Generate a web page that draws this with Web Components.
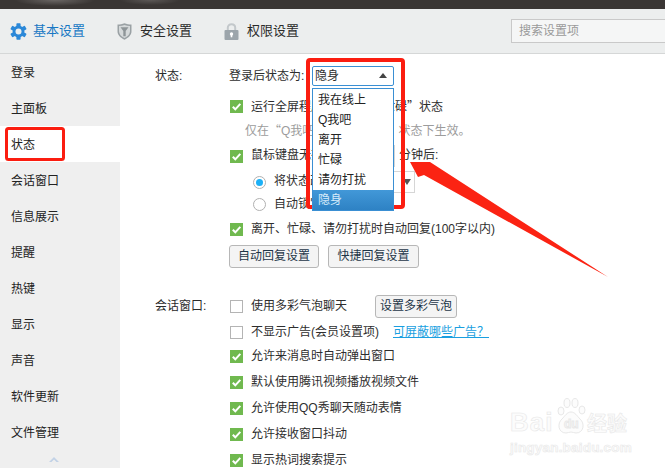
<!DOCTYPE html>
<html lang="zh-CN">
<head>
<meta charset="utf-8">
<title>系统设置</title>
<style>
    html, body { margin: 0; padding: 0; background: #fff; }
    body {
        width: 665px;
        height: 468px;
        overflow: hidden;
        font: 12px/16px "Liberation Sans", "Noto Sans CJK SC", sans-serif;
        color: #2e2e2e;
    }
</style>
</head>
<body>
<qq-settings>
    <qq-tabbar slot="top">
        <qq-tab active icon="gear">基本设置</qq-tab>
        <qq-tab icon="shield">安全设置</qq-tab>
        <qq-tab icon="lock">权限设置</qq-tab>
    </qq-tabbar>
    <qq-sidebar slot="side">
        <qq-nav>登录</qq-nav>
        <qq-nav>主面板</qq-nav>
        <qq-nav active>状态</qq-nav>
        <qq-nav>会话窗口</qq-nav>
        <qq-nav>信息展示</qq-nav>
        <qq-nav>提醒</qq-nav>
        <qq-nav>热键</qq-nav>
        <qq-nav>显示</qq-nav>
        <qq-nav>声音</qq-nav>
        <qq-nav>软件更新</qq-nav>
        <qq-nav>文件管理</qq-nav>
    </qq-sidebar>

    <qq-section label="状态:" style="margin-top:11px">
        <qq-row>登录后状态为:<qq-select value="隐身"></qq-select></qq-row>
        <qq-row gap="8"><qq-check checked>运行全屏程序时切换为<q-q>“</q-q>忙碌<q-q>”</q-q>状态</qq-check></qq-row>
        <qq-row gap="2" indent="16"><qq-hint>仅在<q-q>“</q-q>Q我吧<q-q>”、“</q-q>我在线上<q-q>”</q-q>状态下生效。</qq-hint></qq-row>
        <qq-row gap="4"><qq-check checked>鼠标键盘无操作超过<qq-field></qq-field>分钟后:</qq-check></qq-row>
        <qq-row gap="4" indent="24"><qq-radio checked>将状态改为<qq-field menu></qq-field></qq-radio></qq-row>
        <qq-row gap="0" indent="24"><qq-radio>自动锁定QQ</qq-radio></qq-row>
        <qq-row gap="3"><qq-check checked>离开、忙碌、请勿打扰时自动回复(100字以内)</qq-check></qq-row>
        <qq-row gap="5"><qq-button>自动回复设置</qq-button><qq-button style="margin-left:9px;padding:0 8.5px">快捷回复设置</qq-button></qq-row>
    </qq-section>

    <qq-section label="会话窗口:" style="margin-top:28px">
        <qq-row><qq-check>使用多彩气泡聊天</qq-check><qq-button style="margin-left:28px;padding:0 4px">设置多彩气泡</qq-button></qq-row>
        <qq-row gap="4"><qq-check>不显示广告(会员设置项)</qq-check><qq-link>可屏蔽哪些广告？</qq-link></qq-row>
        <qq-row gap="2"><qq-check checked>允许来消息时自动弹出窗口</qq-check></qq-row>
        <qq-row gap="4"><qq-check checked>默认使用腾讯视频播放视频文件</qq-check></qq-row>
        <qq-row gap="4"><qq-check checked>允许使用QQ秀聊天随动表情</qq-check></qq-row>
        <qq-row gap="4"><qq-check checked>允许接收窗口抖动</qq-check></qq-row>
        <qq-row gap="4"><qq-check checked>显示热词搜索提示</qq-check></qq-row>
    </qq-section>
</qq-settings>
<qq-watermark></qq-watermark>
<qq-marks></qq-marks>

<script>
const ICONS = {
    gear: `<svg width="17" height="17" viewBox="0 0 17 17"><g fill="#2b88d8"><circle cx="8.5" cy="8.5" r="5.9"/><rect x="6.4" y="0.2" width="4.2" height="16.6" rx=".8"/><rect x="6.4" y="0.2" width="4.2" height="16.6" rx=".8" transform="rotate(60 8.5 8.5)"/><rect x="6.4" y="0.2" width="4.2" height="16.6" rx=".8" transform="rotate(120 8.5 8.5)"/></g><circle cx="8.5" cy="8.5" r="3" fill="#eceeee"/></svg>`,
    shield: `<svg width="15" height="17" viewBox="0 0 15 17"><path d="M.5 1.6C3 1.6 5.4 1.1 7.5.3c2.100.8 4.500 1.300 7 1.300v6.700c0 3.800-3 6.600-7 8.400-4-1.800-7-4.600-7-8.400z" fill="#9aa1a4"/><path d="M2 3c2 0 3.800-.4 5.500-1 1.700.6 3.500 1 5.500 1v5.200c0 3-2.300 5.200-5.500 6.700C4.300 13.400 2 11.200 2 8.200z" fill="#d5d9da"/><path d="M3.500 4.300h8L8.700 8v5.200H6.300V8z" fill="#8e9598"/></svg>`,
    lock: `<svg width="15" height="17" viewBox="0 0 15 17"><path d="M3.800 8V4.800C3.800 2.600 5.400 1.200 7.500 1.200s3.700 1.400 3.700 3.600V8" fill="none" stroke="#c3c8cb" stroke-width="2"/><rect x=".5" y="7" width="14" height="10" rx="1" fill="#9ca5ab"/><circle cx="7.500" cy="11" r="1.700" fill="#fff"/><rect x="6.700" y="11" width="1.600" height="3.300" fill="#fff"/></svg>`
};

// small helper so every element below only has to give its markup
function define(name, html, setup) {
    customElements.define(name, class extends HTMLElement {
        constructor() {
            super();
            this.attachShadow({ mode: 'open' });
        }
        connectedCallback() {
            this.shadowRoot.innerHTML = typeof html === 'function' ? html(this) : html;
            if (setup) setup(this);
        }
    });
}

define('qq-settings', `
    <style>
        :host { display: block; width: 665px; height: 468px; overflow: hidden; }
        .title { height: 9px; background:
            radial-gradient(ellipse 40px 6px at 55px 0, #6a6664, transparent),
            radial-gradient(ellipse 30px 5px at 150px 0, #5c5856, transparent),
            #3a3634; }
        .body { display: flex; height: 414px; }
        main { flex: 1; padding-left: 35px; min-width: 0; }
    </style>
    <div class="title"></div>
    <slot name="top"></slot>
    <div class="body">
        <slot name="side"></slot>
        <main><slot></slot></main>
    </div>
`);

define('qq-tabbar', `
    <style>
        :host { display: flex; align-items: center; height: 44px; background: #eceeee;
                border-bottom: 1px solid #d5d7d7; padding-left: 10px; overflow: hidden; }
        .search { margin-left: auto; margin-right: -19px; margin-top: -1px; width: 164px; height: 22px;
                  border: 1px solid #c9c9c9; background: #f5f6f6; color: #9a9a9a; padding-left: 7px;
                  line-height: 22px; flex: none; }
    </style>
    <slot></slot>
    <div class="search">搜索设置项</div>
`);

define('qq-tab', el => `
    <style>
        :host { display: flex; align-items: center; font-size: 13px; color: ${el.hasAttribute('active') ? '#1878c4' : '#2a2a2a'};
                gap: ${el.hasAttribute('active') ? 6 : 8}px; margin-right: 32px; }
        svg { display: block; }
    </style>
    ${ICONS[el.getAttribute('icon')]}<slot></slot>
`);

define('qq-sidebar', `
    <style>
        :host { display: block; width: 120px; flex: none; background: #efefef; position: relative; }
        .more { position: absolute; left: 49px; bottom: 6px; }
    </style>
    <slot></slot>
    <svg class="more" width="10" height="6" viewBox="0 0 10 6"><path d="M0 6 5 1l5 5H7.500L5 3.500 2.500 6z" fill="#c2d2e6"/></svg>
`);

define('qq-nav', el => `
    <style>
        :host { display: block; height: 36px; line-height: 38px; padding-left: 11px;
                background: ${el.hasAttribute('active') ? '#fff' : 'transparent'}; color: #222; }
    </style>
    <slot></slot>
`);

define('qq-section', el => `
    <style>
        :host { display: grid; grid-template-columns: 74px 1fr; }
        .label { line-height: 22px; color: #2a2a2a; }
    </style>
    <div class="label">${el.getAttribute('label')}</div>
    <div><slot></slot></div>
`);

define('qq-row', el => `
    <style>
        :host { display: flex; align-items: center; height: 22px;
                margin-top: ${el.getAttribute('gap') || 0}px;
                padding-left: ${el.getAttribute('indent') || 0}px; }
    </style>
    <slot></slot>
`);

define('qq-check', el => `
    <style>
        :host { display: flex; align-items: center; gap: 8px; padding-left: 1px; white-space: nowrap; }
        svg { flex: none; display: block; }
    </style>
    ${el.hasAttribute('checked')
        ? `<svg width="13" height="13" viewBox="0 0 13 13"><rect width="13" height="13" fill="#70b94f"/><path d="M2.800 6.700 5.300 9.300 10.300 3.800" fill="none" stroke="#fff" stroke-width="2"/></svg>`
        : `<svg width="13" height="13" viewBox="0 0 13 13"><rect x=".5" y=".5" width="12" height="12" fill="#fff" stroke="#b4b4b4"/></svg>`}
    <span><slot></slot></span>
`);

define('qq-radio', el => `
    <style>
        :host { display: flex; align-items: center; gap: 8px; white-space: nowrap; }
        svg { flex: none; display: block; }
    </style>
    <svg width="13" height="13" viewBox="0 0 13 13"><circle cx="6.500" cy="6.500" r="6" fill="#fff" stroke="#b0b0b0"/>${el.hasAttribute('checked') ? '<circle cx="6.500" cy="6.500" r="3.500" fill="#1cb0f6"/>' : ''}</svg>
    <span><slot></slot></span>
`);

define('qq-hint', `<style>:host { color: #9c9c9c; white-space: nowrap; }</style><slot></slot>`);

// full width quotes come from the CJK face, not from Liberation
define('q-q', `<style>:host { font-family: "Noto Sans CJK SC", sans-serif; }</style><slot></slot>`);

define('qq-field', el => `
    <style>
        :host { display: inline-block; box-sizing: border-box; vertical-align: middle; position: relative;
                height: 22px; border: 1px solid #d6d6d6; background: #fff;
                width: ${el.hasAttribute('menu') ? 77 : 32}px;
                margin: 0 4px; }
        i { position: absolute; right: 3px; top: 7px; border: 4px solid transparent; border-top: 6px solid #555; border-bottom: 0; }
    </style>
    ${el.hasAttribute('menu') ? '<i></i>' : ''}
`);

define('qq-button', `
    <style>
        :host { display: inline-flex; align-items: center; justify-content: center; box-sizing: border-box;
                height: 23px; padding: 0 8px; border: 1px solid #b7b7b7; border-radius: 3px;
                background: #f4f4f4; color: #1e3648; white-space: nowrap; flex: none; }
    </style>
    <slot></slot>
`);

define('qq-link', `
    <style>
        :host { color: #1a9fe0; text-decoration: underline; margin-left: 14px; white-space: nowrap; }
    </style>
    <slot></slot>
`);

define('qq-select', el => `
    <style>
        :host { display: block; position: relative; box-sizing: border-box; width: 82px; height: 20px; margin-left: 7.7px;
                border: 1px solid #3a8fd3; border-radius: 2px; background: #fff; padding-left: 2px; line-height: 18px; flex: none; }
        .tri { position: absolute; right: 6px; top: 6px; border: 4.500px solid transparent; border-bottom: 5px solid #444; border-top: 0; }
        ul { position: absolute; left: -1px; top: 21px; width: 80px; margin: 0; padding: 1px 0 0; list-style: none;
             background: #fff; border: 1px solid #3a8fd3; z-index: 2; }
        li { height: 20px; line-height: 20px; padding-left: 5px; color: #222; }
        li.on { background: linear-gradient(#4298d8, #2e82c4); color: #d6ebfa; }
    </style>
    ${el.getAttribute('value')}<span class="tri"></span>
    <ul>
        <li>我在线上</li><li>Q我吧</li><li>离开</li><li>忙碌</li><li>请勿打扰</li><li class="on">隐身</li>
    </ul>
`);

// red marks drawn on top of the screenshot
define('qq-marks', `
    <style>
        :host { position: absolute; left: 0; top: 0; width: 665px; height: 468px; pointer-events: none; }
        svg { display: block; }
    </style>
    <svg width="665" height="468" viewBox="0 0 665 468">
        <g fill="none" stroke="#fb1d10">
            <rect x="6.500" y="128.500" width="57" height="31" rx="2" stroke-width="3"/>
            <rect x="308" y="60" width="95" height="147" rx="2" stroke-width="4"/>
        </g>
        <path d="M410 162 430 162 608 277 424 175 418 177z" fill="#fb2313"/>
    </svg>
`);

define('qq-watermark', `
    <style>
        :host { position: absolute; left: 510px; top: 396px; width: 125px; color: #fcfcfc; pointer-events: none;
                -webkit-text-stroke: .6px #e8e8e8; font-family: "Liberation Sans", "Noto Sans CJK SC", sans-serif; font-weight: bold; }
        .top { display: flex; align-items: flex-end; height: 39px; }
        .bai { font-size: 26px; line-height: 26px; letter-spacing: 1px; width: 46px; flex: none; }
        .paw { flex: none; display: block; margin-right: 1px; }
        .jy { font-size: 20px; line-height: 22px; white-space: nowrap; }
        .url { font-size: 13.5px; line-height: 16px; margin-top: 5px; letter-spacing: .2px; white-space: nowrap; }
        text { font-size: 12px; }
    </style>
    <div class="top">
        <span class="bai">Bai</span>
        <svg class="paw" width="30" height="38" viewBox="0 0 30 38" fill="#fcfcfc" stroke="#e8e8e8">
            <ellipse cx="5" cy="14" rx="3" ry="4"/><ellipse cx="11" cy="6" rx="3" ry="4.500"/><ellipse cx="19" cy="6" rx="3" ry="4.500"/><ellipse cx="26" cy="13" rx="3" ry="4"/>
            <path d="M15 15c4 0 6 4 9 7 5 4 4 14-4 14-2 0-3-1-5-1s-3 1-5 1c-8 0-9-10-4-14 3-3 5-7 9-7z"/>
            <text x="8" y="31">du</text>
        </svg>
        <span class="jy">经验</span>
    </div>
    <div class="url">jingyan.baidu.com</div>
`);
</script>
</body>
</html>
